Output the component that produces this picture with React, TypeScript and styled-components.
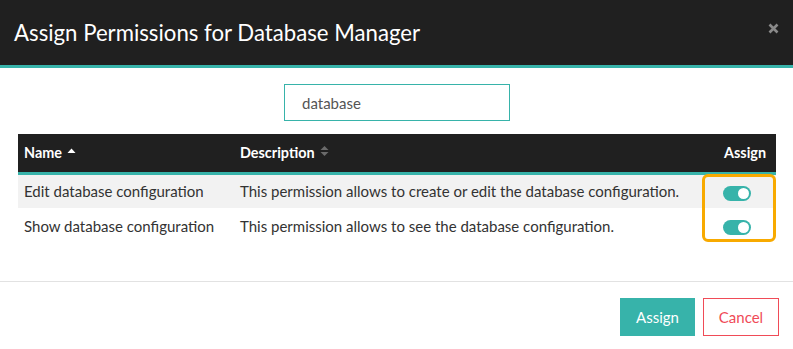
import React, { useState } from 'react';
import styled, { createGlobalStyle } from 'styled-components';

const GlobalStyle = createGlobalStyle`
  html, body {
    margin: 0;
    padding: 0;
    background: #fff;
    font-family: Lato, "Open Sans", sans-serif;
  }
`;

interface Permission {
  name: string;
  description: string;
}

const permissions: Permission[] = [
  {
    name: 'Edit database configuration',
    description: 'This permission allows to create or edit the database configuration.',
  },
  {
    name: 'Show database configuration',
    description: 'This permission allows to see the database configuration.',
  },
];

const Toggle: React.FC<{ on: boolean; onChange: () => void }> = ({ on, onChange }) => (
  <ToggleTrack $on={on} onClick={onChange}>
    <ToggleKnob $on={on} />
  </ToggleTrack>
);

export default function App() {
  const [assigned, setAssigned] = useState<boolean[]>([true, true]);

  const flip = (i: number) => {
    setAssigned((prev) => prev.map((v, idx) => (idx === i ? !v : v)));
  };

  return (
    <>
      <GlobalStyle />
      <Modal>
        <Header>
          <Title>Assign Permissions for Database Manager</Title>
          <CloseButton aria-label="close">
            <svg width="11" height="11" viewBox="0 0 11 11">
              <path d="M1.5 1.5 L9.5 9.5 M9.5 1.5 L1.5 9.5" stroke="#8a8a8a" strokeWidth="2.6" />
            </svg>
          </CloseButton>
        </Header>
        <Body>
          <SearchRow>
            <SearchInput defaultValue="database" />
          </SearchRow>
          <TableWrap>
            <Table>
              <thead>
                <tr>
                  <Th $width={216}>
                    Name <SortUp />
                  </Th>
                  <Th>
                    Description <SortBoth />
                  </Th>
                  <Th $align="right" $width={76}>
                    Assign
                  </Th>
                </tr>
              </thead>
              <tbody>
                {permissions.map((p, i) => (
                  <Row key={p.name} $striped={i % 2 === 0}>
                    <Td>{p.name}</Td>
                    <Td>{p.description}</Td>
                    <Td $align="center">
                      <Toggle on={assigned[i]} onChange={() => flip(i)} />
                    </Td>
                  </Row>
                ))}
              </tbody>
            </Table>
            <Highlight />
          </TableWrap>
        </Body>
        <Footer>
          <PrimaryButton>Assign</PrimaryButton>
          <CancelButton>Cancel</CancelButton>
        </Footer>
      </Modal>
    </>
  );
}

const SortUp = () => (
  <SortIcon width="9" height="10" viewBox="0 0 9 10">
    <path d="M0.5 6 L4.5 1.5 L8.5 6 Z" fill="#fff" />
  </SortIcon>
);

const SortBoth = () => (
  <SortIcon width="9" height="12" viewBox="0 0 9 12">
    <path d="M0.5 5 L4.5 1 L8.5 5 Z" fill="#6b6b6b" />
    <path d="M0.5 7 L4.5 11 L8.5 7 Z" fill="#6b6b6b" />
  </SortIcon>
);

const Modal = styled.div`
  width: 793px;
  height: 349px;
  background: #fff;
  display: flex;
  flex-direction: column;
`;

const Header = styled.div`
  height: 65px;
  background: #202020;
  border-bottom: 3px solid #37b3aa;
  display: flex;
  align-items: center;
  padding: 0 14px;
`;

const Title = styled.h1`
  margin: 0;
  flex: 1;
  color: #fff;
  font-size: 22.2px;
  font-weight: 400;
  padding-bottom: 1px;
`;

const CloseButton = styled.button`
  background: none;
  border: none;
  padding: 0;
  margin-bottom: 8px;
  cursor: pointer;
  display: flex;
`;

const Body = styled.div`
  padding: 16px 17px 0 18px;
`;

const SearchRow = styled.div`
  display: flex;
  justify-content: center;
  margin-bottom: 13px;
`;

const SearchInput = styled.input`
  width: 226px;
  height: 37px;
  box-sizing: border-box;
  border: 1px solid #37b3aa;
  padding: 0 17px;
  font-family: Lato, sans-serif;
  font-size: 15px;
  color: #555;
  outline: none;
`;

const TableWrap = styled.div`
  position: relative;
`;

const Table = styled.table`
  width: 100%;
  border-collapse: collapse;
  font-size: 15px;
  color: #333;
`;

const Th = styled.th<{ $align?: string; $width?: number }>`
  background: #202020;
  color: #fff;
  font-size: 14.4px;
  font-weight: 700;
  height: 39px;
  padding: 0 10px 0 6px;
  text-align: ${(p) => p.$align || 'left'};
  width: ${(p) => (p.$width ? `${p.$width}px` : 'auto')};
  border-bottom: 3px solid #37b3aa;
  box-sizing: border-box;
  white-space: nowrap;
`;

const SortIcon = styled.svg`
  margin-left: 2px;
  vertical-align: 1px;
`;

const Row = styled.tr<{ $striped: boolean }>`
  background: ${(p) => (p.$striped ? '#f2f2f2' : '#fff')};
  height: 35px;
`;

const Td = styled.td<{ $align?: string }>`
  padding: 0 6px;
  text-align: ${(p) => p.$align || 'left'};
  white-space: nowrap;
`;

const ToggleTrack = styled.div<{ $on: boolean }>`
  display: inline-flex;
  align-items: center;
  justify-content: ${(p) => (p.$on ? 'flex-end' : 'flex-start')};
  width: 28px;
  height: 15px;
  border-radius: 8px;
  background: ${(p) => (p.$on ? '#37b3aa' : '#ccc')};
  padding: 0 2px;
  box-sizing: border-box;
  vertical-align: middle;
  margin-right: 2px;
  cursor: pointer;
`;

const ToggleKnob = styled.span<{ $on: boolean }>`
  width: 11px;
  height: 11px;
  border-radius: 50%;
  background: #fff;
`;

const Highlight = styled.div`
  position: absolute;
  left: 684px;
  top: 40px;
  width: 74px;
  height: 68px;
  box-sizing: border-box;
  border: 3.5px solid #f8aa00;
  border-radius: 6px;
  pointer-events: none;
`;

const Footer = styled.div`
  margin-top: auto;
  border-top: 1px solid #e2e2e2;
  height: 68px;
  display: flex;
  align-items: flex-start;
  justify-content: flex-end;
  gap: 8px;
  padding: 16px 14px 0 0;
  box-sizing: border-box;
`;

const ButtonBase = styled.button`
  height: 38px;
  width: 76px;
  font-family: Lato, sans-serif;
  font-size: 15px;
  cursor: pointer;
`;

const PrimaryButton = styled(ButtonBase)`
  background: #37b3aa;
  color: #fff;
  border: none;
  width: 75px;
`;

const CancelButton = styled(ButtonBase)`
  background: #fff;
  color: #f04b57;
  border: 1px solid #f04b57;
`;
